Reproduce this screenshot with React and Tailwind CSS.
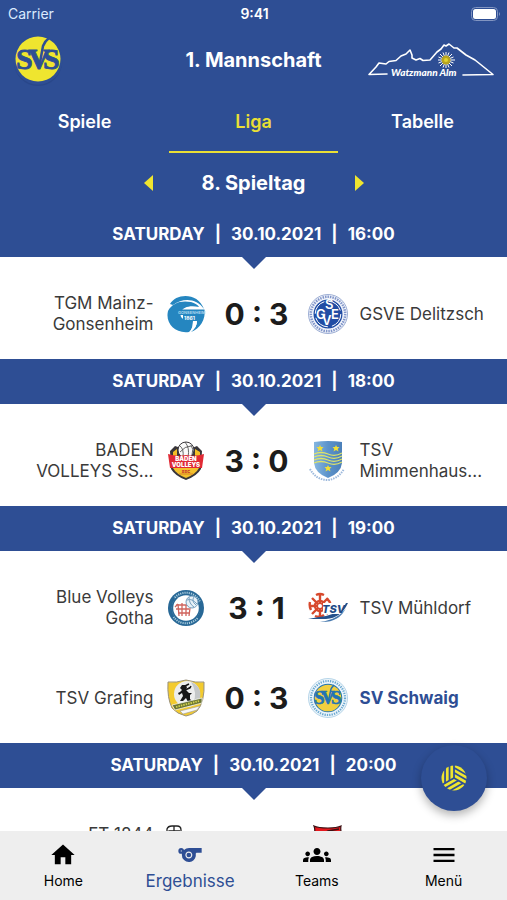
import React, { useState } from 'react';
import clsx from 'clsx';
import { MdHome, MdSports, MdGroups, MdMenu } from 'react-icons/md';

const ClubBadge = () => (
  <svg viewBox="0 0 52 52" className="size-13" role="img" aria-label="SV Schwaig">
    <circle cx="26" cy="28" r="24" fill="#264384" opacity="0.6" />
    <circle cx="26" cy="26" r="24.500" fill="#2e4e94" />
    <circle cx="26" cy="25" r="22.500" fill="#efe52f" />
    <text x="4 16 31" y="35" fontSize="30" fontFamily="Liberation Serif, serif" fontWeight="700" fill="#2e4e94" stroke="#2e4e94" strokeWidth="0.800">SVS</text>
    <path d="M27 34 L31 12 Q33 7 37 4" fill="none" stroke="#2e4e94" strokeWidth="2.500" />
  </svg>
);

const SponsorLogo = () => (
  <svg viewBox="0 0 128 36" className="h-9 w-32" role="img" aria-label="Watzmann Alm">
    <path
      d="M20 32 L2 32.500 L9 25 L12 21 L19 22 L22 19.500 L29 18.500 L34 14 L39 12 L43 8 L45 13 L45 16 L49 18 L53 16.500 L56 18.500 L63 18 L70 10 L74 7 L77 3 L79 4 L82 2 L87 6 L90 6 L99 13 L108 18 L113 22 L126 32.500 L96 33"
      fill="none" stroke="#fff" strokeWidth="1.600" strokeLinejoin="round" strokeLinecap="round"
    />
    <path d="M79 10 V26 M71 18 H88 M73 12 L85 24 M85 12 L73 24 M76 10.500 L82 25.500 M82 10.500 L76 25.500 M71.500 15 L86.500 21 M86.500 15 L71.500 21" stroke="#fff" strokeWidth="1" />
    <circle cx="79" cy="18" r="4.500" fill="#b9a51f" />
    <circle cx="79" cy="18" r="2" fill="#e2d52e" />
    <text x="24" y="34" fontFamily="Lato, sans-serif" fontSize="10" fontWeight="900" fontStyle="italic" fill="#fff">Watzmann Alm</text>
  </svg>
);

const MainzLogo = () => (
  <svg viewBox="0 0 40 40">
    <path d="M4 10 C10 -1 32 -2 38 15 C31 5 18 3 7 11 Z" fill="#2586c0" />
    <path d="M2 17 C6 9 15 6 25 8 C29 9 32 11 33 13 C24 11 17 13 15 18 C13 23 17 27 27 27 L27 29 C27 33 26 35 23 38 C9 40 -1 29 2 17 Z" fill="#2586c0" />
    <path d="M11 15.500 H38.500 C40 25 34 35 25 38 C29 35 31 31 31 27 H17 V21 H11 Z" fill="#2586c0" />
    <text x="12" y="20" fontFamily="Inter, sans-serif" fontSize="4" fontWeight="600" fill="#b7dcf0">GONSENHEIM</text>
    <text x="18" y="26" fontFamily="Inter, sans-serif" fontSize="5" fontWeight="700" fill="#fff">1861</text>
    <path d="M27 27 H31 Q31 34 24 38 Q27 33 27 27 Z" fill="#fff" />
  </svg>
);

const DelitzschLogo = () => (
  <svg viewBox="0 0 40 40">
    <circle cx="20" cy="20" r="19.500" fill="#f2f5fb" stroke="#9daed4" strokeWidth="1" />
    <circle cx="20" cy="20" r="17.200" fill="none" stroke="#8195c9" strokeWidth="2.500" strokeDasharray="1.500 1" />
    <circle cx="20" cy="20" r="14.500" fill="#214da4" />
    <circle cx="20" cy="20" r="12.800" fill="none" stroke="#fff" strokeWidth="1" strokeDasharray="16 4.100" />
    <text x="8 17 14 23" y="25 15 31 25" fontFamily="Inter, sans-serif" fontWeight="600" fontSize="13" fill="#fff">GSVE</text>
  </svg>
);

const BadenLogo = () => (
  <svg viewBox="0 0 40 40">
    <path d="M4 10 L9 5 L15 7 L26 7 L31 5 L36 10 L35 28 Q31 35 20 39 Q9 35 5 28 Z" fill="#39363a" />
    <path d="M7 11 L11 8 V15 H7 Z M29 8 L34 11 V15 H29 Z" fill="#f3be25" />
    <circle cx="20" cy="9" r="8" fill="#fafafa" stroke="#39363a" />
    <path d="M14 5 Q18 8 17 16 M19 1 Q24 7 22 16 M25 4 Q28 8 26 14 M14 11 Q19 5 25 5" fill="none" stroke="#555" strokeWidth="0.900" />
    <path d="M2 13 Q11 16 20 14 Q29 16 38 13 L36 27 H4 Z" fill="#e02a35" />
    <path d="M7 27 H33 Q30 33 20 37 Q10 33 7 27 Z" fill="#f3c02c" />
    <g fontFamily="Inter, sans-serif" fontWeight="900" textAnchor="middle" fill="#fff">
      <text x="20" y="20" fontSize="6">BADEN</text>
      <text x="20" y="26" fontSize="6">VOLLEYS</text>
      <text x="20" y="32" fontSize="4" fill="#c83a2c">SSC</text>
    </g>
    <path d="M13 33 H27" stroke="#d98326" strokeWidth="1" />
  </svg>
);

const MimmenhausenLogo = () => (
  <svg viewBox="0 0 40 40">
    <defs>
      <linearGradient id="shield" x1="0" x2="1">
        <stop offset="0" stopColor="#86b7e0" />
        <stop offset="0.500" stopColor="#5c93cb" />
        <stop offset="1" stopColor="#4a7fb9" />
      </linearGradient>
    </defs>
    <path d="M2 28 Q8 39 20 39 Q30 38 36 28" fill="none" stroke="#9db9dc" strokeWidth="2" strokeDasharray="1.500 1" />
    <path d="M6 1 Q20 -1 34 1 V22 Q33 32 20 37 Q7 32 6 22 Z" fill="url(#shield)" />
    <path d="M6 13 Q13 10 20 13 T34 12 M6 16 Q13 13 20 16 T34 15 M6 19 Q13 16 20 19 T34 18 M6 22 Q13 19 20 22 T34 21" fill="none" stroke="#dfe36a" strokeWidth="1.300" />
    <g fill="#f1df36">
      <path id="star" d="M12 4 L13 6 L15.500 6 L13.700 8 L14.500 10.500 L12 9 L9.500 10.500 L10.300 8 L8.500 6 L11 6 Z" />
      <use href="#star" x="16" />
      <use href="#star" x="8" y="20" />
    </g>
  </svg>
);

const GothaLogo = () => (
  <svg viewBox="0 0 40 40">
    <circle cx="20" cy="20" r="18" fill="#286896" />
    <circle cx="20" cy="20" r="15.300" fill="none" stroke="#a8cbdc" strokeWidth="2" strokeDasharray="1.200 1" pathLength="96" />
    <path d="M8 10 A15.300 15.300 0 0 0 7 29 M34 14 A15.300 15.300 0 0 1 32 30" fill="none" stroke="#286896" strokeWidth="3" />
    <circle cx="20" cy="20" r="12.800" fill="#fff" />
    <path d="M10 17 H24 M10 21 H23 M12 25 H23 M12 16 L13 28 M16 15 V28 M20 17 V28 M24 20 L23 28 M9 19 L12 16" fill="none" stroke="#cf645d" strokeWidth="1.300" />
    <circle cx="26" cy="14" r="6" fill="#e7f1f7" stroke="#76a0bf" />
    <path d="M21 12 Q26 10 31 16 M23 9 Q23 16 28 19 M28 9 Q25 13 30 17" fill="none" stroke="#76a0bf" />
  </svg>
);

const MuehldorfLogo = () => (
  <svg viewBox="0 0 40 40">
    <g fill="none" stroke="#d7492d" strokeWidth="2.400">
      <circle cx="12" cy="18" r="5" />
      <path d="M12 6 V30 M1 18 H20 M4 10 L20 26 M20 10 L4 26" />
      <path d="M8 7 Q12 5 16 7 M19 11 Q23 14 22 17 M2 14 Q1 18 3 22 M7 28 Q12 30 16 27" />
    </g>
    <circle cx="12" cy="18" r="2" fill="#fff" />
    <path d="M0 31 H18 Q33 30 40 15 L36 15 Q30 26 18 28 Q10 29 0 31 Z" fill="#25518c" />
    <path d="M12 34 Q31 35 38 20 Q31 31 12 34 Z" fill="#4678ae" />
    <path d="M15 15 H38 L32 26 H15 Z" fill="#fff" />
    <text x="14" y="25" fontFamily="Inter, sans-serif" fontSize="11" fontWeight="800" fontStyle="italic" fill="#1e4a86">TSV</text>
  </svg>
);

const GrafingLogo = () => (
  <svg viewBox="0 0 40 40">
    <path d="M2 4 Q10 5 20 2 Q30 5 38 4 Q39 24 31 33 Q26 37 20 38 Q11 36 6 30 Q1 20 2 4 Z" fill="#f3cb2f" stroke="#9a927c" strokeWidth="1" />
    <circle cx="21" cy="16" r="13" fill="#eceded" />
    <path d="M25 4 Q36 8 34 20 L27 25 Q32 15 25 4 Z" fill="#c4c7c8" />
    <path d="M14 10 L16 7 L19 7 L21 9 L20 12 L23 15 L26 15 L24 17 L24 21 L26 23 L22 24 L20 20 L17 23 L14 23 L17 18 L16 15 L13 17 L12 15 L14 14 L16 12 Z" fill="#171717" />
    <path d="M19 8 L23 6 M19 12 L24 10 L25 8" stroke="#171717" strokeWidth="1.400" />
    <path d="M6 27 L36 20 L36 25 L9 32 Z" fill="#6c7634" stroke="#fff" strokeWidth="0.700" />
    <path d="M10 29 L33 23" stroke="#d4d34d" strokeWidth="1.800" strokeDasharray="1.500 1" />
    <path d="M14 33 L34 28 L31 32 L17 36 Z" fill="#f8f8f8" stroke="#999" strokeWidth="0.600" />
  </svg>
);

const SchwaigLogo = () => (
  <svg viewBox="0 0 40 40">
    <circle cx="20" cy="20" r="19.500" fill="#edf5fa" stroke="#a6cbe3" strokeWidth="0.800" />
    <circle cx="20" cy="20" r="17" fill="none" stroke="#6aa8d1" strokeWidth="2.200" strokeDasharray="1.300 1.100" />
    <circle cx="20" cy="20" r="14.300" fill="#2374b3" />
    <circle cx="20" cy="20" r="13.300" fill="#f1cf3f" />
    <text x="6 13 23" y="26" fontSize="19" fontFamily="Liberation Serif, serif" fontWeight="700" fill="#2374b3" stroke="#2374b3" strokeWidth="0.600">SVS</text>
    <path d="M20 25 L23 11 Q24 9 26 7" fill="none" stroke="#2374b3" strokeWidth="1.500" />
  </svg>
);

const FreiburgLogo = () => (
  <svg viewBox="0 0 40 40">
    <path d="M1 10 V4 Q2 1 6 1 H11 Q15 1 15 5 V8 H18 M3 10 V6 H14 M8 1 V10 M12 10 L18 8 M20 7 L24 8" fill="none" stroke="#222" strokeWidth="1.300" />
    <path d="M1 10 V35 H30 V10" fill="none" stroke="#222" />
  </svg>
);

const RedShieldLogo = () => (
  <svg viewBox="0 0 40 40">
    <path d="M6 1 Q10 3 20 3 Q29 3 33 1 Q32 6 35 12 Q35 30 20 38 Q5 30 5 12 Q8 6 6 1 Z" fill="#e5181d" stroke="#3b1013" strokeWidth="1.200" />
    <path d="M12 10 L20 6 L31 4" fill="none" stroke="#3b1013" strokeWidth="1.500" />
  </svg>
);

const BallIcon = () => (
  <svg viewBox="-12.500 -12.500 25 25" className="size-[26px]">
    <circle r="12" fill="#efe52f" />
    <g fill="none" stroke="#2e4e94" strokeWidth="1.700">
      <path id="seams" d="M0 0 V-13 M-4.300 2.500 V-13 M-8.600 5 V-13" />
      <use href="#seams" transform="rotate(120)" />
      <use href="#seams" transform="rotate(240)" />
    </g>
  </svg>
);

const groups = [
  {
    time: '16:00',
    games: [
      { home: 'TGM Mainz-Gonsenheim', HomeLogo: MainzLogo, score: '0 : 3', AwayLogo: DelitzschLogo, away: 'GSVE Delitzsch' },
    ],
  },
  {
    time: '18:00',
    games: [
      { home: 'BADEN VOLLEYS\u00a0SS...', HomeLogo: BadenLogo, score: '3 : 0', AwayLogo: MimmenhausenLogo, away: 'TSV Mimmenhaus...' },
    ],
  },
  {
    time: '19:00',
    games: [
      { home: 'Blue Volleys Gotha', HomeLogo: GothaLogo, score: '3 : 1', AwayLogo: MuehldorfLogo, away: 'TSV Mühldorf' },
      { home: 'TSV Grafing', HomeLogo: GrafingLogo, score: '0 : 3', AwayLogo: SchwaigLogo, away: 'SV Schwaig', own: true },
    ],
  },
  {
    time: '20:00',
    games: [
      { home: 'FT 1844 Freiburg', HomeLogo: FreiburgLogo, score: '', AwayLogo: RedShieldLogo, away: '' },
    ],
  },
];

const navItems = [
  { label: 'Home', Icon: MdHome },
  { label: 'Ergebnisse', Icon: MdSports },
  { label: 'Teams', Icon: MdGroups },
  { label: 'Menü', Icon: MdMenu },
];

const StatusBar = () => (
  <div className="grid h-7 grid-cols-3 items-center pl-2 pr-1.5 text-sm text-blue-100">
    <span>Carrier</span>
    <span className="text-center font-semibold text-white">9:41</span>
    <svg viewBox="0 0 30 14" className="h-3.5 w-7.5 justify-self-end">
      <rect x="0.500" y="0.500" width="26" height="13" rx="4" fill="none" stroke="#8295c1" />
      <rect x="2" y="2" width="23" height="10" rx="2.500" fill="#fff" />
      <path d="M28 5 Q30 7 28 9 Z" fill="#8295c1" />
    </svg>
  </div>
);

const Game = ({ home, HomeLogo, score, AwayLogo, away, own }) => (
  <li className="grid h-[90px] grid-cols-[1fr_40px_78px_40px_1fr] items-center gap-x-3 pl-6 pr-[18px] text-[17px] leading-[21px] text-[#3a3a3a]">
    <span className="text-right">{home}</span>
    <span className="size-10"><HomeLogo /></span>
    <span className="whitespace-nowrap text-center text-3xl font-bold text-[#1c1c1c]">{score}</span>
    <span className="size-10"><AwayLogo /></span>
    <span className={clsx(own && 'font-bold text-[#2e4e94]')}>{away}</span>
  </li>
);

const GameGroup = ({ time, games }) => (
  <section>
    <h3 className="relative flex h-[45px] items-center justify-center gap-2.5 bg-[#2e4e94] text-[17px] font-bold text-white">
      <span>SATURDAY</span>
      <span>|</span>
      <span>30.10.2021</span>
      <span>|</span>
      <span>{time}</span>
      <svg viewBox="0 0 24 12" className="absolute left-1/2 top-full h-3 w-6 -translate-x-1/2">
        <path d="M0 0 H24 L12 12 Z" fill="#2e4e94" />
      </svg>
    </h3>
    <ul className="pt-3">
      {games.map(game => <Game key={game.home} {...game} />)}
    </ul>
  </section>
);

export default function App() {
  const [tab, setTab] = useState('Liga');
  const [page, setPage] = useState('Ergebnisse');

  return (
    <div className="flex h-screen flex-col bg-white font-[Inter,sans-serif]">
      <header className="bg-[#2e4e94] text-white">
        <StatusBar />
        <div className="grid h-16 grid-cols-[128px_1fr_128px] items-center px-3">
          <ClubBadge />
          <h1 className="text-center text-xl font-bold">1. Mannschaft</h1>
          <SponsorLogo />
        </div>
        <div className="grid h-[61px] grid-cols-3">
          {['Spiele', 'Liga', 'Tabelle'].map(name => (
            <button
              key={name}
              onClick={() => setTab(name)}
              className={clsx(
                'border-b-2 text-lg font-semibold',
                tab === name ? 'border-[#e9df35] text-[#e9df35]' : 'border-transparent'
              )}
            >
              {name}
            </button>
          ))}
        </div>
        <div className="flex h-[59px] items-center justify-center">
          <button aria-label="Vorheriger Spieltag" className="p-2">
            <svg viewBox="0 0 9 16" className="h-4 w-[9px]"><path d="M9 0 V16 L0 8 Z" fill="#efe52f" /></svg>
          </button>
          <h2 className="w-[186px] text-center text-xl font-bold">8. Spieltag</h2>
          <button aria-label="Nächster Spieltag" className="p-2">
            <svg viewBox="0 0 9 16" className="h-4 w-[9px]"><path d="M0 0 V16 L9 8 Z" fill="#efe52f" /></svg>
          </button>
        </div>
      </header>

      <div className="relative min-h-0 flex-1">
        <main className="h-full overflow-hidden">
          {groups.map(group => <GameGroup key={group.time} {...group} />)}
        </main>
        <button
          aria-label="Volleyball"
          className="absolute bottom-5 right-5 flex size-[66px] items-center justify-center rounded-full bg-[#2e4e94] shadow-[0_4px_10px_rgba(0,0,0,0.3)]"
        >
          <BallIcon />
        </button>
      </div>

      {/* Bottom navigation */}
      <nav className="grid h-[69px] shrink-0 grid-cols-4 bg-[#eeeeee]">
        {navItems.map(({ label, Icon }) => (
          <button
            key={label}
            onClick={() => setPage(label)}
            className={clsx(
              'flex flex-col items-center justify-center pt-0.5',
              page === label ? 'text-[#2e4e94]' : 'text-black'
            )}
          >
            <Icon size={28} />
            <span className={clsx('leading-6', page === label ? 'text-[17px]' : 'text-sm')}>{label}</span>
          </button>
        ))}
      </nav>
    </div>
  );
}
